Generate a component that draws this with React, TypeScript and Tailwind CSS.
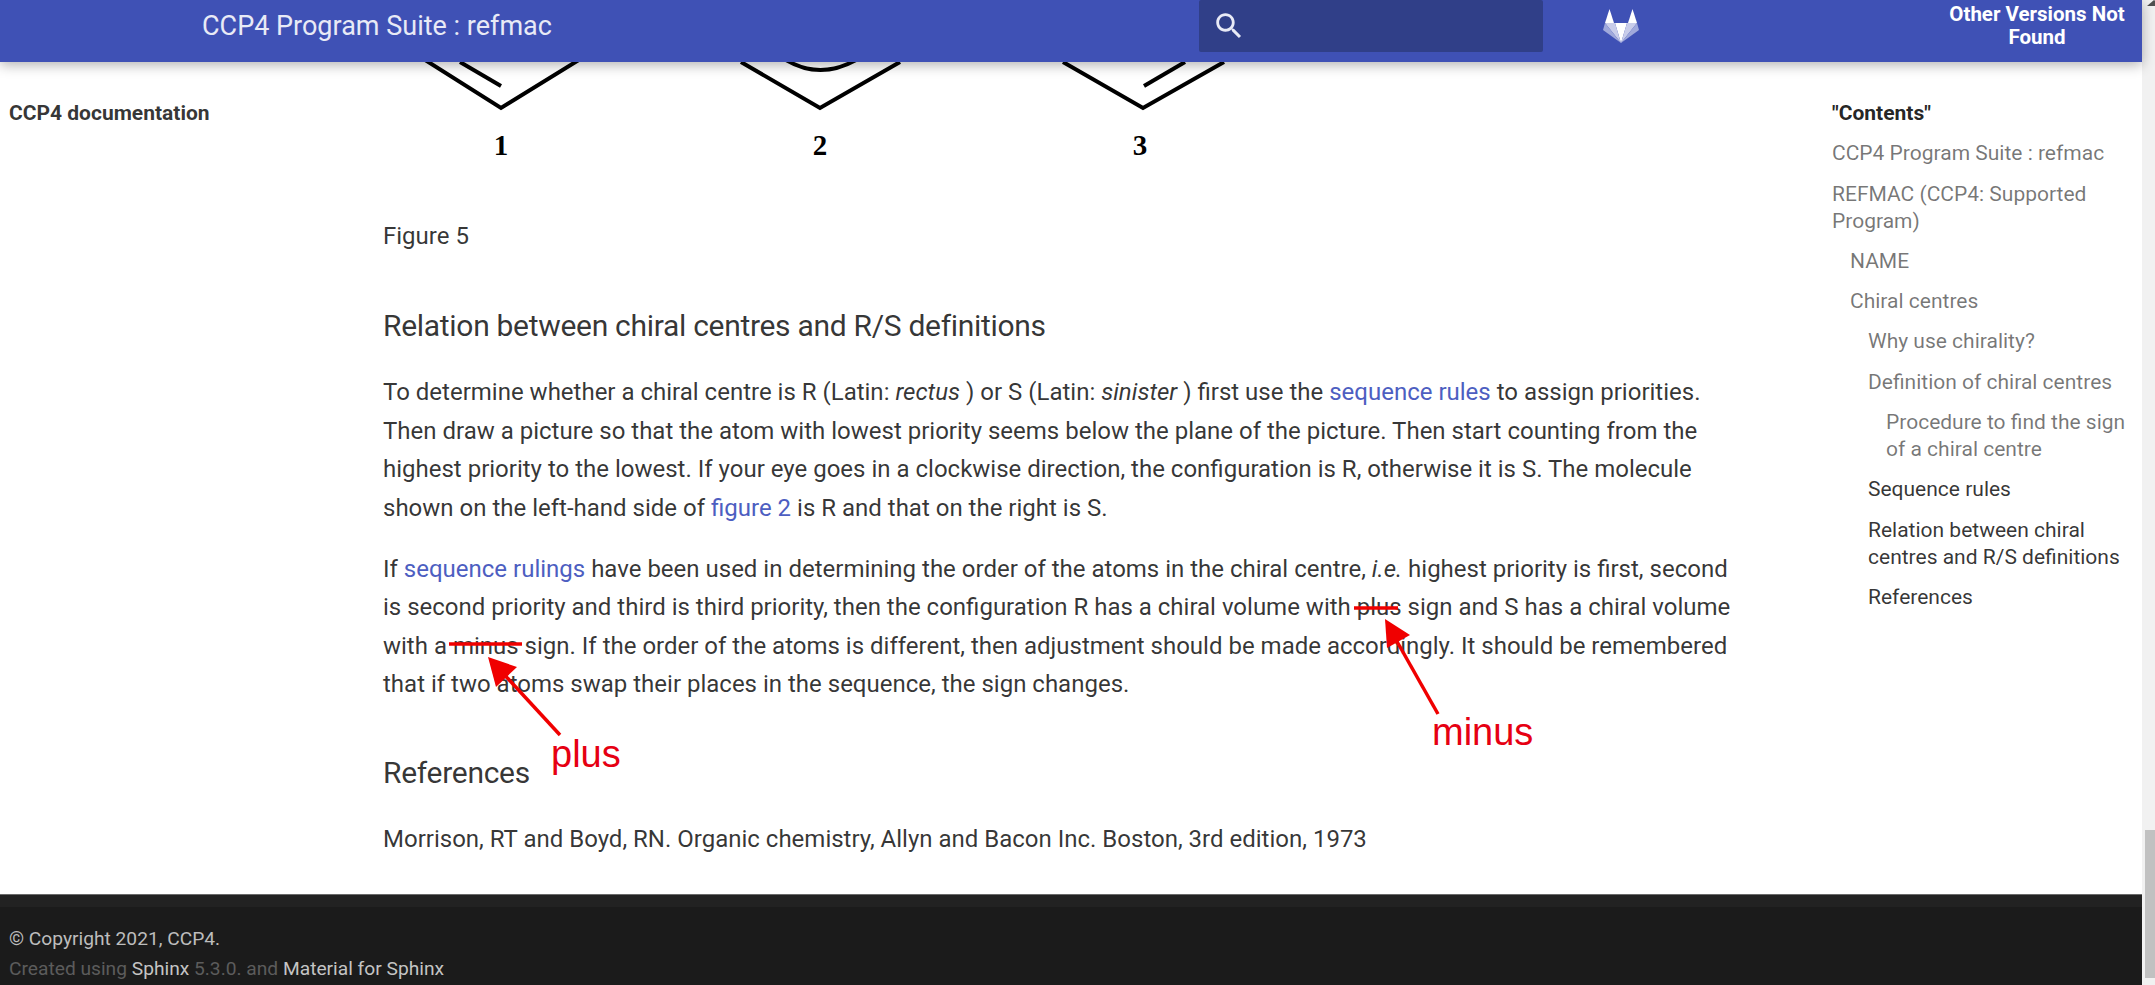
import React from "react";

const tocItems = [
  { label: "CCP4 Program Suite : refmac", depth: 0 },
  { label: "REFMAC (CCP4: Supported Program)", depth: 0 },
  { label: "NAME", depth: 1 },
  { label: "Chiral centres", depth: 1 },
  { label: "Why use chirality?", depth: 2 },
  { label: "Definition of chiral centres", depth: 2 },
  { label: "Procedure to find the sign of a chiral centre", depth: 3 },
  { label: "Sequence rules", depth: 2, active: true },
  { label: "Relation between chiral centres and R/S definitions", depth: 2, active: true },
  { label: "References", depth: 2, active: true },
];

function SearchIcon() {
  return (
    <svg width="34" height="34" viewBox="0 0 24 24" fill="#e8eaf6">
      <path d="M15.5 14h-.79l-.28-.27C15.41 12.59 16 11.11 16 9.5 16 5.91 13.09 3 9.5 3S3 5.91 3 9.5 5.91 16 9.5 16c1.61 0 3.09-.59 4.23-1.57l.27.28v.79l5 4.99L20.49 19l-4.99-5zm-6 0C7.01 14 5 11.99 5 9.5S7.01 5 9.5 5 14 7.01 14 9.5 11.99 14 9.5 14z" />
    </svg>
  );
}

function GitlabLogo() {
  return (
    <svg width="36" height="34" viewBox="0 0 36 34">
      <polygon points="6.5,0 11,14 2,14" fill="#ffffff" />
      <polygon points="29.5,0 34,14 25,14" fill="#ffffff" />
      <polygon points="12,14 24,14 18,34" fill="#ffffff" />
      <polygon points="2,14 12,14 18,34" fill="#c9cdea" />
      <polygon points="34,14 24,14 18,34" fill="#c9cdea" />
      <polygon points="2,14 0,21 18,34" fill="#a0a9db" />
      <polygon points="34,14 36,21 18,34" fill="#a0a9db" />
    </svg>
  );
}

function Figure() {
  return (
    <svg width="860" height="100" viewBox="0 0 860 100" className="block">
      <g fill="none" stroke="#000" strokeWidth="4">
        <polyline points="39,-4 118,46 199,-4" />
        <line x1="77" y1="0" x2="118" y2="24" />
        <polyline points="358,0 437,46 517,0" />
        <path d="M403,-2 Q437,18 473,-2" />
        <polyline points="680,0 760,46 841,0" />
        <line x1="802" y1="0" x2="761" y2="24" />
      </g>
      <g fontFamily='"Liberation Serif", serif' fontWeight="700" fontSize="29" textAnchor="middle" fill="#000">
        <text x="118" y="93">1</text>
        <text x="437" y="93">2</text>
        <text x="757" y="93">3</text>
      </g>
    </svg>
  );
}

export default function App() {
  return (
    <div className="relative flex h-[985px] w-full overflow-hidden bg-white font-['Roboto',sans-serif] text-[rgba(0,0,0,0.8)]">
      <div className="flex w-[2142px] flex-col">
        {/* header */}
        <header className="relative z-10 flex h-[62px] shrink-0 items-start bg-[#3f51b5] text-white shadow-[0_3px_12px_rgba(0,0,0,0.3)]">
          <div className="ml-[202px] mt-[9px] w-[997px] text-[27px] leading-[34px] text-[#e8eaf6]">CCP4 Program Suite : refmac</div>
          <div className="flex h-[52px] w-[344px] items-center rounded-[2px] bg-[#303f88] pl-[13px]">
            <SearchIcon />
          </div>
          <div className="ml-[60px] mt-[9px]">
            <GitlabLogo />
          </div>
          <div className="ml-[298px] mt-[3px] w-[200px] text-center text-[20.5px] font-bold leading-[23px]">
            Other Versions Not Found
          </div>
        </header>

        {/* body */}
        <div className="flex min-h-0 flex-1">
          <aside className="w-[383px] shrink-0 pl-[9px] pt-[39px] text-[21px] font-bold leading-[24px]">
            CCP4 documentation
          </aside>
          <main className="w-[1350px] shrink-0 text-[24px] leading-[38.4px]">
            <Figure />
            <p className="mt-[55px]">Figure 5</p>
            <h2 className="mt-[52px] text-[30px] leading-[38px] tracking-[-0.01em]">Relation between chiral centres and R/S definitions</h2>
            <p className="mt-[28px]">
              To determine whether a chiral centre is R (Latin: <em>rectus</em> ) or S (Latin: <em>sinister</em> ) first use the{" "}
              <a className="text-[#4d5ec1]">sequence rules</a> to assign priorities. Then draw a picture so that the atom with lowest priority seems below the plane of the picture. Then start counting from the highest priority to the lowest. If your eye goes in a clockwise direction, the configuration is R, otherwise it is S. The molecule shown on the left-hand side of{" "}
              <a className="text-[#4d5ec1]">figure 2</a> is R and that on the right is S.
            </p>
            <p className="mt-[23px]">
              If <a className="text-[#4d5ec1]">sequence rulings</a> have been used in determining the order of the atoms in the chiral centre, <em>i.e.</em> highest priority is first, second is second priority and third is third priority, then the configuration R has a chiral volume with plus sign and S has a chiral volume with a minus sign. If the order of the atoms is different, then adjustment should be made accordingly. It should be remembered that if two atoms swap their places in the sequence, the sign changes.
            </p>
            <h2 className="mt-[50px] text-[30px] leading-[38px] tracking-[-0.01em]">References</h2>
            <p className="mt-[28px]">Morrison, RT and Boyd, RN. Organic chemistry, Allyn and Bacon Inc. Boston, 3rd edition, 1973</p>
          </main>
          <nav className="ml-[99px] w-[298px] pt-[38px] text-[21px] leading-[27px]">
            <div className="mb-[13.3px] font-bold text-[rgba(0,0,0,0.87)]">"Contents"</div>
            {tocItems.map((item) => (
              <div
                key={item.label}
                className={`mb-[13.3px] ${item.active ? "text-[rgba(0,0,0,0.8)]" : "text-[rgba(0,0,0,0.54)]"} ${
                  item.depth === 0 ? "" : item.depth === 1 ? "pl-[18px]" : item.depth === 2 ? "pl-[36px]" : "pl-[54px]"
                }`}
              >
                {item.label}
              </div>
            ))}
          </nav>
        </div>

        {/* footer */}
        <footer className="h-[91px] shrink-0 border-t border-[#6a6a6a] bg-[linear-gradient(#222222_12px,#1b1b1b_12px)] pl-[9px] pt-[29px] text-[19.2px] leading-[30px]">
          <div className="text-[#bdbdbd]">© Copyright 2021, CCP4.</div>
          <div className="text-[#5c5c5c]">
            Created using <span className="text-[#c4c4c4]">Sphinx</span> 5.3.0. and{" "}
            <span className="text-[#c4c4c4]">Material for Sphinx</span>
          </div>
        </footer>
      </div>

      {/* scrollbar */}
      <div className="flex w-[13px] flex-col justify-between overflow-hidden bg-[#f1f1f1] pb-[7px] pl-[3px]">
        <div className="ml-[2px] h-0 w-0 shrink-0 border-x-[7px] border-b-[6px] border-x-transparent border-b-[#505050]" />
        <div className="h-[148px] w-[10px] shrink-0 bg-[#c1c1c1]" />
      </div>

      {/* hand drawn annotations over the page */}
      <svg width="2142" height="985" className="pointer-events-none absolute left-0 top-0 z-20">
        <g stroke="#f00000" strokeWidth="3.5" fill="none">
          <line x1="449" y1="644" x2="522" y2="644" />
          <line x1="1354" y1="608" x2="1398" y2="608" />
          <line x1="560" y1="735" x2="500" y2="670" />
          <line x1="1438" y1="714" x2="1395" y2="638" />
        </g>
        <polygon points="488,657 517,667 496,687" fill="#f00000" />
        <polygon points="1385,619 1410,635 1387,648" fill="#f00000" />
      </svg>
      <span className="absolute left-[551px] top-[732px] z-20 font-['Liberation_Sans',sans-serif] text-[38px] leading-[44px] text-[#e60012]">plus</span>
      <span className="absolute left-[1432px] top-[710px] z-20 font-['Liberation_Sans',sans-serif] text-[38px] leading-[44px] text-[#e60012]">minus</span>
    </div>
  );
}
